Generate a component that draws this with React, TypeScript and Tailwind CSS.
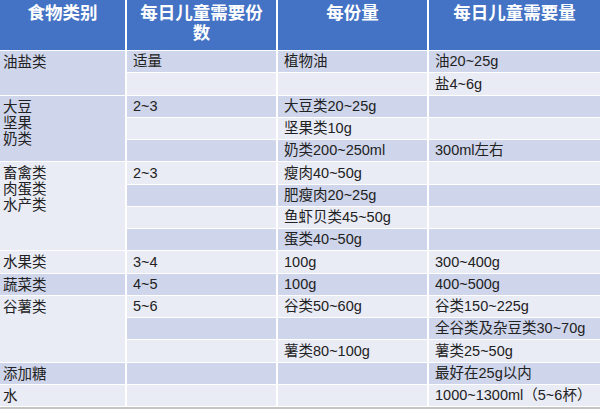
import React from "react"

type Row = {
  first?: { text: string; span: 1 | 2 | 3 | 4 }
  cells: string[]
}

const rows: Row[] = [
  { first: { text: "油盐类", span: 2 }, cells: ["适量", "植物油", "油20~25g"] },
  { cells: ["", "", "盐4~6g"] },
  { first: { text: "大豆\n坚果\n奶类", span: 3 }, cells: ["2~3", "大豆类20~25g", ""] },
  { cells: ["", "坚果类10g", ""] },
  { cells: ["", "奶类200~250ml", "300ml左右"] },
  { first: { text: "畜禽类\n肉蛋类\n水产类", span: 4 }, cells: ["2~3", "瘦肉40~50g", ""] },
  { cells: ["", "肥瘦肉20~25g", ""] },
  { cells: ["", "鱼虾贝类45~50g", ""] },
  { cells: ["", "蛋类40~50g", ""] },
  { first: { text: "水果类", span: 1 }, cells: ["3~4", "100g", "300~400g"] },
  { first: { text: "蔬菜类", span: 1 }, cells: ["4~5", "100g", "400~500g"] },
  { first: { text: "谷薯类", span: 3 }, cells: ["5~6", "谷类50~60g", "谷类150~225g"] },
  { cells: ["", "", "全谷类及杂豆类30~70g"] },
  { cells: ["", "薯类80~100g", "薯类25~50g"] },
  { first: { text: "添加糖", span: 1 }, cells: ["", "", "最好在25g以内"] },
  { first: { text: "水", span: 1 }, cells: ["", "", "1000~1300ml（5~6杯）"] },
]

const spanClass = {
  1: "row-span-1",
  2: "row-span-2",
  3: "row-span-3",
  4: "row-span-4",
}

const headers = ["食物类别", "每日儿童需要份数", "每份量", "每日儿童需要量"]

export default function App() {
  return (
    <div
      className="w-[600px] h-[409px] bg-white overflow-hidden text-[#222]"
      style={{ fontFamily: '"Liberation Sans", "Noto Sans CJK SC", sans-serif' }}
    >
      <div className="grid grid-cols-[125px_149px_149px_1fr] grid-rows-[50px_repeat(16,21.25px)] gap-x-[2px] gap-y-px bg-white">

        {/* HEADER */}
        {headers.map((h, i) => (
          <div
            key={h}
            className={`bg-[#4472c4] text-white font-bold text-[17.5px] leading-[20px] text-center pt-[3px] ${i === 1 ? "px-[6px]" : "px-1"}`}
          >
            {h}
          </div>
        ))}

        {/* BODY */}
        {rows.map((row, r) => {
          const dark = r % 2 === 0
          const bg = dark ? "bg-[#cfd5ea]" : "bg-[#e9ebf5]"
          return (
            <React.Fragment key={r}>
              {row.first && (
                <div
                  className={`${bg} ${spanClass[row.first.span]} pl-[3px] pt-[3px] text-[14.5px] leading-[16px] whitespace-pre-line`}
                >
                  {row.first.text}
                </div>
              )}
              {row.cells.map((c, j) => (
                <div
                  key={j}
                  className={`${bg} flex items-center pl-[6px] text-[14.5px] leading-none whitespace-nowrap`}
                >
                  {c}
                </div>
              ))}
            </React.Fragment>
          )
        })}
      </div>
      <div className="h-[3px] bg-[#c4c4c4] mt-px" />
    </div>
  )
}
